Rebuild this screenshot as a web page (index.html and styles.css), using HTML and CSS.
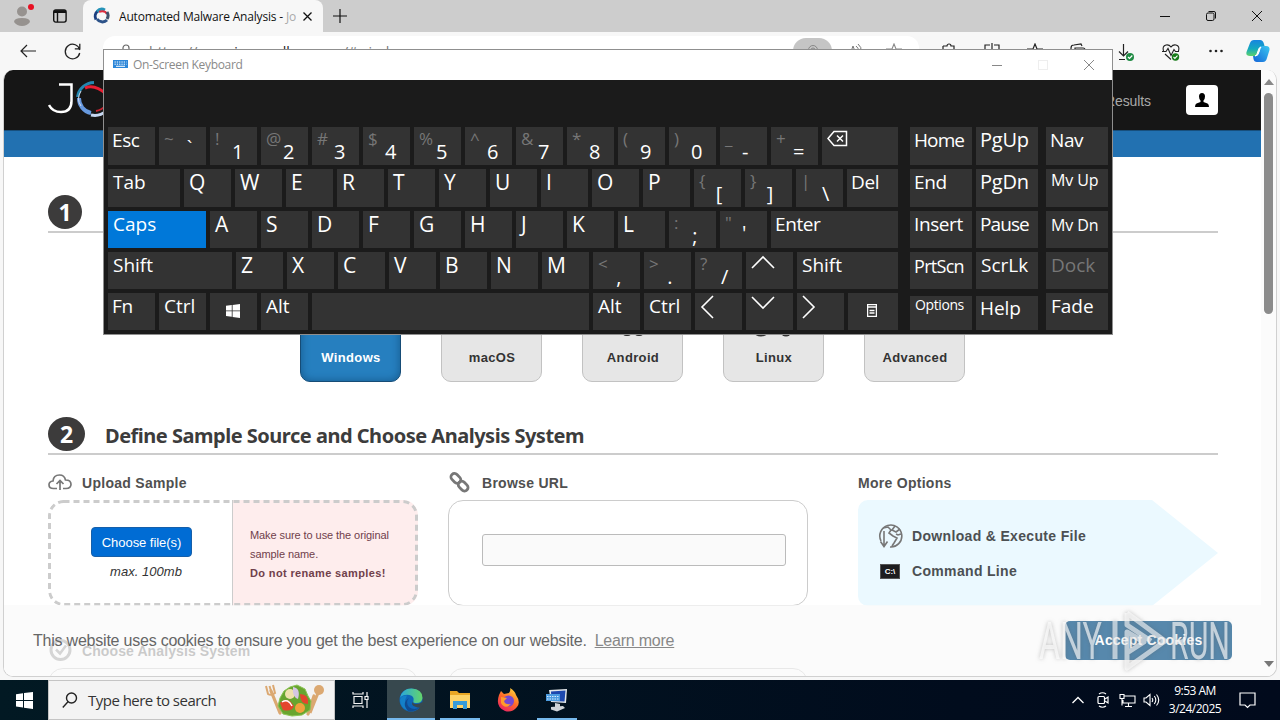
FILE: index.html
```html
<!DOCTYPE html>
<html lang="en">
<head>
<meta charset="utf-8">
<title>Automated Malware Analysis</title>
<link rel="stylesheet" href="styles.css">
</head>
<body>
<div class="screen">
  <header class="tabstrip">
    <div class="tabstrip-left">
      <svg class="profile" width="24" height="28" viewBox="0 0 24 28"><circle cx="10" cy="10.500" r="5" fill="#96928f"/><path d="M2 21q0-4 8-4t8 4q-3 4-8 4t-8-4z" fill="#96928f"/><circle cx="19" cy="6" r="3" fill="#e81123"/></svg>
      <svg class="workspace" width="14" height="14" viewBox="0 0 14 14" fill="none" stroke="#111" stroke-width="1.4"><rect x=".7" y=".9" width="12.4" height="12.2" rx="2"/><path d="M4.5 4v9M1 3.2h12" /><path d="M1 2.3h12" stroke-width="2.4"/></svg>
    </div>
    <div class="tab">
      <svg width="18" height="18" viewBox="0 0 18 18" fill="none" stroke-width="3"><path d="M3 12.500A6.500 6.500 0 0 1 5 4" stroke="#1c3f80"/><path d="M4 4.500A6.600 6.600 0 0 1 12 3" stroke="#2593b8"/><path d="M6 4.800Q12 3 14 7" stroke="#e02c3c" stroke-width="2"/><path d="M14 5A6.500 6.500 0 0 1 14 12" stroke="#40516b"/><path d="M4 12A6.500 6.500 0 0 0 14 13" stroke="#2d5389"/></svg>
      <span class="tab-title">Automated Malware Analysis - <i>Jo</i></span>
      <svg class="tab-close" width="9" height="9" viewBox="0 0 9 9" stroke="#111" stroke-width="1.3"><path d="M.5.5l8 8M8.500.5l-8 8"/></svg>
    </div>
    <svg class="newtab" width="14" height="14" viewBox="0 0 14 14" stroke="#111" stroke-width="1.200"><path d="M7 0v14M0 7h14"/></svg>
    <div class="wincontrols">
      <svg width="10" height="10" viewBox="0 0 10 10" stroke="#111"><path d="M0 5.500h10"/></svg>
      <svg width="10" height="10" viewBox="0 0 10 10" stroke="#111" fill="none"><rect x=".5" y="2" width="7.500" height="7.500" rx="1.500"/><path d="M2.500.5H8Q9.500.5 9.500 2v5.500"/></svg>
      <svg width="10" height="10" viewBox="0 0 10 10" stroke="#111"><path d="M0 0l10 10M10 0L0 10"/></svg>
    </div>
  </header>

  <div class="toolbar">
    <svg class="back" width="16" height="14" viewBox="0 0 16 14" fill="none" stroke="#222" stroke-width="1.200"><path d="M16 7H1M7 1L1 7l6 6"/></svg>
    <svg class="reload" width="17" height="17" viewBox="0 0 17 17" fill="none" stroke="#222" stroke-width="1.300"><path d="M15.700 7A7.300 7.300 0 1 0 15.700 10M15.800.8v5h-5"/></svg>
    <div class="address">
      <svg width="12" height="15" viewBox="0 0 12 15" fill="none" stroke="#666" stroke-width="1.200"><rect x="1" y="5.500" width="10" height="8" rx="1"/><path d="M3 5.500V4a3 3 0 0 1 6 0v1.500"/></svg>
      <span class="url">https://<b>www.joesandbox.com</b>/#windows</span>
      <div class="pill"><svg width="10" height="12" viewBox="0 0 10 12" fill="none" stroke="#888"><circle cx="5" cy="5" r="4.500"/><circle cx="5" cy="5" r="2"/></svg></div>
      <svg class="read" width="14" height="14" viewBox="0 0 14 14" fill="none" stroke="#777"><path d="M1 13L5 2l4 11M8 2q3 2 2 5M10 0q4 3 3 8"/></svg>
      <svg width="16" height="16" viewBox="0 0 16 16" fill="none" stroke="#888" stroke-width="1.100"><path d="M8 1l2 5h6l-5 4 2 6-5-4-5 4 2-6-5-4h6z"/></svg>
    </div>
    <div class="tools">
      <svg width="16" height="16" viewBox="0 0 16 16" fill="none" stroke="#222" stroke-width="1.200"><path d="M2 3h4a2 2 0 0 1 4 0h3v4M2 3v12h12V8"/></svg>
      <svg width="16" height="16" viewBox="0 0 16 16" fill="none" stroke="#222" stroke-width="1.200"><path d="M6 2H1v12h5M10 2h5v12h-5M8 0v16"/></svg>
      <svg width="16" height="16" viewBox="0 0 16 16" fill="none" stroke="#222" stroke-width="1.200"><path d="M8 1l2 5h6l-5 4 2 6-5-4-5 4 2-6-5-4h6z"/></svg>
      <svg width="16" height="16" viewBox="0 0 16 16" fill="none" stroke="#222" stroke-width="1.200"><path d="M1 12V5q0-3 3-3l7-1 1 2M5 5h8q2 0 2 2v7H5z"/></svg>
      <svg width="18" height="18" viewBox="0 0 18 18" fill="none" stroke="#222" stroke-width="1.200"><path d="M6.500 1v12M2 8.500L6.500 13 11 8.500M2 16.500h6"/><circle cx="13" cy="14" r="4" fill="#1f8a43" stroke="none"/><path d="M11 14l1.500 1.500 2.800-3" stroke="#fff"/></svg>
      <svg width="18" height="18" viewBox="0 0 18 18" fill="none" stroke="#222" stroke-width="1.100"><path d="M1.500 8Q0 3 4 2q3-.7 5 2 2-2.700 5-2 4 1 2.500 6M3 11l6 5.500M0 8.500h4l2-3 3 7 3-6 1.500 2H17"/><circle cx="13.500" cy="14" r="3.700" fill="#187c19" stroke="none"/><path d="M11.500 14l1.400 1.400 2.600-2.700" stroke="#fff"/></svg>
      <svg class="dots" width="16" height="16" viewBox="0 0 16 16" fill="#222"><circle cx="2.500" cy="8" r="1.300"/><circle cx="8" cy="8" r="1.300"/><circle cx="13.500" cy="8" r="1.300"/></svg>
      <svg width="24" height="24" viewBox="0 0 24 24"><defs><linearGradient id="ca" x1="0" y1="0" x2="0" y2="1"><stop offset="0" stop-color="#1785e0"/><stop offset=".55" stop-color="#14a9be"/><stop offset="1" stop-color="#5ed26b"/></linearGradient><linearGradient id="cb" x1="1" y1="0" x2="0" y2="1"><stop offset="0" stop-color="#3bc8f0"/><stop offset="1" stop-color="#1464d8"/></linearGradient></defs><path d="M8 1h6q3 0 4 4l.8 3h-4L10 17H4Q-.5 17 .5 13L4 4q1-3 4-3z" fill="url(#ca)"/><path d="M14 7h6q4 0 3.500 4L21 19q-1 4-4 4h-6q-3 0-3.500-3L7 17h3q2 0 3-4z" fill="url(#cb)"/><path d="M15 8q-2 0-3 4-1 5-3 5 3 0 4-4t2-5z" fill="#fff" stroke="#fff"/></svg>
    </div>
  </div>

  <div class="viewport">
    <div class="page">
      <div class="site-header">
        <svg class="logo" width="70" height="40" viewBox="0 0 70 40" fill="none"><path d="M11 4.500h12.500V21q0 11-10.500 11Q4.500 32 1 25" stroke="#fff" stroke-width="2.500"/><path d="M29.500 17A17 17 0 0 1 46 2.500" stroke="#2387b0" stroke-width="3"/><path d="M37 8Q47 4 58 14" stroke="#e61e32" stroke-width="3"/><path d="M31 18A15 15 0 0 0 43 33" stroke="#6799df" stroke-width="4"/><path d="M33 11q-5 8 0 15" stroke="#d7deea" stroke-width="1"/><path d="M43 35A17 17 0 0 0 58 31" stroke="#c6d7f2" stroke-width="3"/><path d="M48 31q6-1 10-6" stroke="#c22431" stroke-width="2"/></svg>
        <span class="results">Results</span>
        <div class="user"><svg width="14" height="15" viewBox="0 0 14 15"><path d="M7 0q3 0 3 3.500Q10 6 8.500 7.500V9l4 1.500Q14 11 14 14H0q0-3 1.500-3.500l4-1.500V7.500Q4 6 4 3.500 4 0 7 0z"/></svg></div>
      </div>
      <div class="site-nav"></div>
      <main class="content">
        <div class="step step-one"><span class="num">1</span></div>
        <div class="platforms">
          <div class="tile active">Windows</div>
          <div class="tile">macOS</div>
          <div class="tile"><svg class="glyph" width="40" height="8" viewBox="0 0 40 8" fill="#333"><rect x="10" y="0" width="8" height="7" rx="3"/><rect x="22" y="0" width="8" height="7" rx="3"/></svg>Android</div>
          <div class="tile"><svg class="glyph" width="40" height="8" viewBox="0 0 40 8" fill="#333"><ellipse cx="7" cy="3" rx="7" ry="4.500"/><ellipse cx="32" cy="3" rx="5" ry="4.500"/></svg>Linux</div>
          <div class="tile">Advanced</div>
        </div>
        <div class="step step-two"><span class="num">2</span><h2>Define Sample Source and Choose Analysis System</h2></div>
        <div class="columns">
          <section>
            <h3><svg width="24" height="17" viewBox="0 0 24 17" fill="none" stroke="#777" stroke-width="1.700"><path d="M9 14.500H5.500Q1 14.500 1 10.700 1 7.500 5 7 5.500 1 11.500 1q5 0 6 5 5.500 0 5.500 4.300 0 4.200-5 4.200h-3M12 16V6.500M8.500 10L12 6.500l3.500 3.500"/></svg>Upload Sample</h3>
            <div class="upload">
              <svg class="dash" width="370" height="106"><rect x="1.500" y="1.500" width="367" height="103" rx="14" fill="none" stroke="#ccc" stroke-width="3" stroke-dasharray="6 4"/></svg>
              <div class="choose"><span class="btn">Choose file(s)</span><em>max. 100mb</em></div>
              <div class="warn"><p>Make sure to use the original</p><p>sample name.</p><p class="strong">Do not rename samples!</p></div>
            </div>
          </section>
          <section>
            <h3><svg width="24" height="22" viewBox="0 0 24 22" fill="none" stroke="#777" stroke-width="2.800"><rect x="-5" y="-3.500" width="11" height="7" rx="3.500" transform="translate(7.500 6) rotate(46)"/><rect x="-6" y="-3.500" width="11" height="7" rx="3.500" transform="translate(15.500 14.500) rotate(46)"/></svg>Browse URL</h3>
            <div class="browse"><div class="field"></div></div>
          </section>
          <section>
            <h3>More Options</h3>
            <div class="options">
              <div class="option"><svg width="25" height="26" viewBox="0 0 25 26" fill="none" stroke="#777" stroke-width="1.600"><path d="M3 18A11 11 0 1 1 12 24M6 8v15M2.500 18.500L6 23.500l3.500-5"/><path d="M5 5l5-1 3 3-2 3 4 3 4 2-3 5-2 3M17 3l-3 4 4 2 4-3M23 11l-3 1-2-1"/></svg>Download &amp; Execute File</div>
              <div class="option"><span class="cmd">C:\</span>Command Line</div>
            </div>
          </section>
        </div>
        <div class="columns below">
          <section>
            <h3><svg width="24" height="24" viewBox="0 0 24 24" fill="none" stroke="#777"><circle cx="12.500" cy="11" r="9.500" stroke-width="3"/><path d="M8 10.500l4 4 6-8" stroke-width="2.500"/></svg>Choose Analysis System</h3>
            <div class="stub"></div>
          </section>
          <section><h3></h3><div class="stub"></div></section>
        </div>
      </main>
      <div class="cookies"><p>This website uses cookies to ensure you get the best experience on our website.</p><a>Learn more</a><span class="accept">Accept Cookies</span></div>
    </div>
    <div class="scrollbar"><i class="up"></i><div class="thumb"></div><i class="down"></i></div>
  </div>

  <footer class="taskbar">
    <div class="start"><svg width="17" height="17" viewBox="0 0 17 17" fill="#fff"><path d="M0 2.200L7 1.300v6.600H0zM8 1.100L17 0v7.900H8zM0 8.900h7v6.700l-7-1zM8 8.900h9V17l-9-1.200z"/></svg></div>
    <div class="search">
      <svg width="16" height="17" viewBox="0 0 16 17" fill="none" stroke="#222" stroke-width="1.400"><circle cx="9.500" cy="6" r="5"/><path d="M6 9.800L.8 15.500"/></svg>
      <span>Type here to search</span>
      <svg class="salad" width="64" height="34" viewBox="0 0 64 34"><path d="M7 8l9 22M50 13l-6 18" stroke="#dba871" stroke-width="3.200" stroke-linecap="round"/><path d="M2 3l2 8q3 2 7-1L9 2M5.500 3l1.500 5" stroke="#dba871" stroke-width="2" fill="none"/><circle cx="55" cy="7" r="5" fill="#dba871"/><path d="M54 10l-8 20" stroke="#dba871" stroke-width="3"/><path d="M14 23l2-8 4-7 6-4 7-2 8 4 3 7 3 5-1 9-8 5-10 1-9-2z" fill="#68a52f" stroke="#8cc455"/><path d="M16 20q7-8 14 3-2 6-11 4z" fill="#e4452d"/><path d="M18 19q6-4 10 4" fill="none" stroke="#fff" stroke-width="1.500"/><path d="M36 11q9 0 8 10-8 0-8-10z" fill="#e4452d"/><circle cx="26" cy="11" r="5" fill="#f0e1ac"/><path d="M29 4q8 1 5 12-6-2-5-12z" fill="#d5c6e4"/><circle cx="36" cy="25" r="5" fill="#f0a23c"/></svg>
    </div>
    <div class="app"><svg width="18" height="18" viewBox="0 0 18 18" fill="none" stroke="#f4f4f4" stroke-width="1.200"><path d="M1 1v2h10V1M1 17v-2h10v2M2 5.500h8v7H2zM15 1v4M15 9v8M13 5.500h3v3h-3z"/></svg></div>
    <div class="app edge"><svg width="24" height="24" viewBox="0 0 24 24"><defs><linearGradient id="eg"><stop offset="0" stop-color="#2aa7dc"/><stop offset="1" stop-color="#63d56b"/></linearGradient></defs><circle cx="12" cy="12" r="11.500" fill="#0e66b8"/><path d="M1 10Q3 .5 12.500.5 23.500 1 23.500 10q-.5 5-6 5-4 0-3-2 1-5-4-6Q4 6 1 10z" fill="url(#eg)"/><path d="M14 13q-1 3 4 3 3 0 5-2l2 2-3 4q-8-1-9-4z" fill="#39484e"/><path d="M1 12q1-5 7-4.500Q3 16 10 23 1 20 1 12z" fill="#1480c8"/><path d="M10 10q-4 4 0 9 5 4 11 0l-2 2q-5 3-10 2-7-8 1-13z" fill="#104b91"/></svg></div>
    <div class="app run"><svg width="22" height="20" viewBox="0 0 22 20"><path d="M1 1h7l2 2h11v15H1z" fill="#e9a724"/><path d="M1 5h20v13H1z" fill="#fdd367"/><path d="M4 19v-8h14v8h-4v-4H8v4z" fill="#359bd9"/></svg></div>
    <div class="app"><svg width="23" height="24" viewBox="0 0 23 24"><defs><linearGradient id="fg" x1=".8" y1="0" x2=".2" y2="1"><stop offset="0" stop-color="#ffd83b"/><stop offset=".5" stop-color="#ff6a28"/><stop offset="1" stop-color="#e81e68"/></linearGradient></defs><path d="M2 7l2-4 3 3 5-1q2-3 1-5 5 3 6 7 5 7 1 12-5 6-12 4Q-2 19 2 7z" fill="url(#fg)"/><circle cx="11.500" cy="13" r="5.500" fill="#7448d2"/><path d="M4 9l6 1-3 3q1 4 7 3-6 6-10-1z" fill="#ff9b2a"/></svg></div>
    <div class="app run"><svg width="24" height="24" viewBox="0 0 24 24"><path d="M4 2l18-1-1 14-15-1z" fill="#e3e7ea"/><path d="M6 3.500l14.500-1-1 11-13-.5z" fill="#1d48ae"/><path d="M1 6h14v7H1z" fill="#4c9ce0"/><path d="M2 8.500h12M2 11h12" stroke="#d7ebff" stroke-dasharray="1.500 1"/><path d="M10 15l5 1v4h-5zM6 19l12-1 2 2-8 3.500-6-2z" fill="#cfd3d8"/></svg></div>
    <div class="tray">
      <svg width="12" height="8" viewBox="0 0 12 8" fill="none" stroke="#fff" stroke-width="1.300"><path d="M.5 7L6 1.500 11.500 7"/></svg>
      <svg width="12" height="16" viewBox="0 0 12 16" fill="none" stroke="#fff" stroke-width="1.200"><rect x="1" y="4.500" width="6.500" height="7" rx="1"/><path d="M8 7l3-2v6L8 9M2 2q3.500-2.500 7 0M2 14q3.500 2.500 7 0"/></svg>
      <svg width="17" height="15" viewBox="0 0 17 15" fill="none" stroke="#fff" stroke-width="1.100"><path d="M5 3h11v7H4V7M9.500 10v3M6 13.500h7M1 1.500h4v4H1zM3 5.500v7"/></svg>
      <svg width="17" height="14" viewBox="0 0 17 14" fill="none" stroke="#fff" stroke-width="1.100"><path d="M1 5v4h2l4 3.500v-11L3 5zM9 5q1.500 2 0 4M11.300 3q3 4 0 8M13.500 1.500q4.500 5.500 0 11"/></svg>
      <div class="clock"><span>9:53 AM</span><span>3/24/2025</span></div>
      <svg width="17" height="17" viewBox="0 0 17 17" fill="none" stroke="#fff" stroke-width="1.200"><path d="M1 1h15v12h-5l-2.500 2.500L6 13H1z"/></svg>
    </div>
  </footer>

  <div class="osk">
    <div class="osk-title">
      <svg width="15" height="9" viewBox="0 0 15 9"><rect width="15" height="8" fill="#2b86d9"/><path d="M1.500 2h12M1.500 4.200h12" stroke="#fff" stroke-dasharray="1.300 1"/><path d="M3 6.300h9" stroke="#fff"/></svg>
      <span>On-Screen Keyboard</span>
      <div class="osk-controls">
        <svg width="10" height="10" viewBox="0 0 10 10" stroke="#888"><path d="M0 5.500h10"/></svg>
        <svg width="10" height="10" viewBox="0 0 10 10" stroke="#eee" fill="none"><rect x=".5" y=".5" width="9" height="9"/></svg>
        <svg width="10" height="10" viewBox="0 0 10 10" stroke="#888"><path d="M0 0l10 10M10 0L0 10"/></svg>
      </div>
    </div>
    <div class="osk-body">
      <div class="keys">
        <div class="row tall">
          <div class="key">Esc</div><div class="key dual mid"><s>~</s><b>`</b></div><div class="key dual"><s>!</s><b>1</b></div><div class="key dual"><s>@</s><b>2</b></div><div class="key dual"><s>#</s><b>3</b></div><div class="key dual"><s>$</s><b>4</b></div><div class="key dual"><s>%</s><b>5</b></div><div class="key dual"><s>^</s><b>6</b></div><div class="key dual"><s>&amp;</s><b>7</b></div><div class="key dual"><s>*</s><b>8</b></div><div class="key dual"><s>(</s><b>9</b></div><div class="key dual"><s>)</s><b>0</b></div><div class="key dual punct"><s>_</s><b>-</b></div><div class="key dual"><s>+</s><b>=</b></div>
          <div class="key grow"><svg class="bksp" width="21" height="17" viewBox="0 0 21 17" fill="none" stroke="#fff" stroke-width="1.500"><path d="M1 8.500L7 1.500h12.500v14H7zM10 5.500l6 6M16 5.500l-6 6"/></svg></div>
        </div>
        <div class="row tall">
          <div class="key w72 wide">Tab</div><div class="key lt">Q</div><div class="key lt">W</div><div class="key lt">E</div><div class="key lt">R</div><div class="key lt">T</div><div class="key lt">Y</div><div class="key lt">U</div><div class="key lt">I</div><div class="key lt">O</div><div class="key lt">P</div><div class="key dual punct"><s>{</s><b>[</b></div><div class="key dual punct"><s>}</s><b>]</b></div><div class="key dual"><s>|</s><b>\</b></div><div class="key grow">Del</div>
        </div>
        <div class="row">
          <div class="key w98 on wide">Caps</div><div class="key lt">A</div><div class="key lt">S</div><div class="key lt">D</div><div class="key lt">F</div><div class="key lt">G</div><div class="key lt">H</div><div class="key lt">J</div><div class="key lt">K</div><div class="key lt">L</div><div class="key dual punct"><s>:</s><b>;</b></div><div class="key dual quote"><s>"</s><b>'</b></div><div class="key grow">Enter</div>
        </div>
        <div class="row">
          <div class="key w124 wide">Shift</div><div class="key lt">Z</div><div class="key lt">X</div><div class="key lt">C</div><div class="key lt">V</div><div class="key lt">B</div><div class="key lt">N</div><div class="key lt">M</div><div class="key dual punct"><s>&lt;</s><b>,</b></div><div class="key dual punct"><s>&gt;</s><b>.</b></div><div class="key dual"><s>?</s><b>/</b></div>
          <div class="key"><svg class="arrow" width="24" height="14" viewBox="0 0 24 14"><path d="M1 13L12 2l11 11"/></svg></div><div class="key grow wide">Shift</div>
        </div>
        <div class="row">
          <div class="key">Fn</div><div class="key wide">Ctrl</div>
          <div class="key center"><svg width="14" height="14" viewBox="0 0 17 17" fill="#fff"><path d="M0 2.200L7 1.300v6.600H0zM8 1.100L17 0v7.900H8zM0 8.900h7v6.700l-7-1zM8 8.900h9V17l-9-1.200z"/></svg></div>
          <div class="key wide">Alt</div><div class="key w277"></div><div class="key wide">Alt</div><div class="key wide">Ctrl</div>
          <div class="key"><svg class="arrow side" width="14" height="24" viewBox="0 0 14 24"><path d="M13 1L2 12l11 11"/></svg></div>
          <div class="key"><svg class="arrow" width="24" height="14" viewBox="0 0 24 14"><path d="M1 1l11 11L23 1"/></svg></div>
          <div class="key"><svg class="arrow side" width="14" height="24" viewBox="0 0 14 24"><path d="M1 1l11 11L1 23"/></svg></div>
          <div class="key grow center"><svg width="10" height="13" viewBox="0 0 10 13" fill="none" stroke="#fff" stroke-width="1.300"><path d="M.6.600h8.800v11.800H.6zM0 3h10M2.500 6.500h5M2.500 9h5" /></svg></div>
        </div>
      </div>
      <div class="side-keys">
        <div class="key tight">Home</div><div class="key big">PgUp</div><div class="key">Nav</div>
        <div class="key">End</div><div class="key big">PgDn</div><div class="key small">Mv Up</div>
        <div class="key">Insert</div><div class="key tight">Pause</div><div class="key small low">Mv Dn</div>
        <div class="key prt">PrtScn</div><div class="key wide">ScrLk</div><div class="key off wide">Dock</div>
        <div class="key opt">Options</div><div class="key drop">Help</div><div class="key wide">Fade</div>
      </div>
    </div>
  </div>

  <svg class="watermark" width="210" height="66" viewBox="0 0 210 66">
    <text x="7" y="50" textLength="63" lengthAdjust="spacingAndGlyphs">ANY</text>
    <path d="M83 12v38M95 4l38 28-38 27v-36l17 10-17 11M95 4v12l24 16"/>
    <text x="138" y="50" textLength="60" lengthAdjust="spacingAndGlyphs">RUN</text>
  </svg>
</div>
</body>
</html>
```
FILE: styles.css
```css
* { box-sizing: border-box; }
body { margin: 0; font-family: "Liberation Sans", Arial, sans-serif; }
h2, h3, p { margin: 0; }
svg { display: block; flex: none; }
.screen { position: relative; width: 1280px; height: 720px; overflow: hidden; display: flex; flex-direction: column; background: #f7f7f7; }

.tabstrip { height: 32px; display: flex; background: #cdcdcd; flex: none; }
.tabstrip-left { width: 83px; display: flex; }
.profile { margin: 1px 0 0 12px; }
.workspace { margin: 9px 0 0 17px; }
.tab { width: 240px; padding: 0 11px 0 10px; display: flex; align-items: center; background: #f7f7f7; border-radius: 8px 8px 0 0; }
.tab-title { margin-left: 8px; width: 177px; font: 12px "Open Sans", sans-serif; letter-spacing: -.18px; color: #111; white-space: nowrap; overflow: hidden; }
.tab-title i { font-style: normal; color: #aaa; }
.tab-close { margin-left: 7px; }
.newtab { margin: 9px 0 0 10px; }
.wincontrols { margin-left: auto; padding: 11px 18px 0 0; display: flex; gap: 36px; }

.toolbar { height: 38px; flex: none; display: flex; align-items: center; background: #f7f7f7; }
.back { margin-left: 20px; }
.reload { margin-left: 28px; }
.address { width: 816px; height: 30px; margin-left: 22px; padding: 0 17px; display: flex; align-items: center; background: #fff; border-radius: 12px; }
.url { margin-left: 17px; font: 14px "Open Sans", sans-serif; letter-spacing: .1px; color: #777; }
.url b { color: #222; font-weight: 400; }
.pill { width: 39px; height: 26px; margin-left: auto; border-radius: 13px; background: #c5c5c5; display: flex; align-items: center; justify-content: center; }
.read { margin: 0 24px 0 16px; }
.tools { flex: 1; padding: 0 10px 0 22px; display: flex; justify-content: space-between; align-items: center; }
.tools svg:nth-child(5), .tools svg:nth-child(6) { margin: 1px -4px 0 4px; }
.dots { margin: 0 -5px 0 5px; }

.viewport { height: 607px; margin: 0 3px 3px; flex: none; display: flex; background: #fff; border: 1px solid #d0d0d0; border-top: 0; border-radius: 10px; overflow: hidden; }
.page { position: relative; width: 1257px; height: 606px; overflow: hidden; background: #fff; }
.site-header { height: 60px; display: flex; align-items: center; background: #161616; }
.logo { margin-left: 44px; }
.results { margin: 2px 0 0 987px; font-size: 14px; letter-spacing: -.1px; color: #a9a9a9; }
.user { width: 32px; height: 30px; margin-left: auto; margin-right: 43px; border-radius: 4px; background: #fff; display: flex; align-items: center; justify-content: center; }
.site-nav { height: 27px; background: #2271b1; border-top: 1px solid #174f7d; }
.content { padding: 0 43px 0 44px; }
.step { display: flex; height: 38px; border-bottom: 2px solid #ccc; color: #3c3c3c; }
.step-one { margin-top: 38px; }
.step-two { margin-top: 35px; }
.num { width: 34px; height: 34px; flex: none; border-radius: 50%; background: #3c3b3b; color: #fff; font: bold 23px/34px "Noto Sans", sans-serif; text-align: center; }
.step-two .num { width: 37px; }
h2 { margin-left: 20px; font: bold 20px/38px "Noto Sans", sans-serif; letter-spacing: -.49px; white-space: nowrap; }
.platforms { margin: 48px 0 0 252px; display: flex; gap: 40px; }
.tile { position: relative; width: 101px; height: 101px; padding: 68px 0 0 1px; border: 1px solid #c2c2c2; border-radius: 10px; background: #e6e6e6; color: #333; font-weight: bold; font-size: 13px; line-height: 16px; letter-spacing: .35px; text-align: center; }
.tile.active { background: #267fbf; border-color: #164c76; color: #fff; box-shadow: inset 0 0 8px #15598c; }
.glyph { position: absolute; top: 47px; left: 30px; }

.columns { display: flex; }
.columns section { width: 370px; }
.columns section + section { width: 360px; margin-left: 30px; }
.columns section + section + section { margin-left: 50px; }
h3 { height: 45px; padding-top: 10px; display: flex; align-items: center; gap: 10px; color: #505050; font-size: 14px; letter-spacing: .28px; }
.upload { position: relative; height: 106px; display: flex; border-radius: 15px; overflow: hidden; }
.dash { position: absolute; left: 0; top: 0; }
.choose { width: 184px; padding: 27px 0 0 43px; }
.btn { display: block; width: 101px; height: 30px; border: 1px solid #155faa; border-radius: 4px; background: #006cd4; color: #fff; font-size: 13px; line-height: 29px; letter-spacing: -.05px; text-align: center; }
em { display: block; margin: 6px 0 0 19px; font-size: 13px; line-height: 18px; letter-spacing: .05px; color: #333; }
.warn { flex: 1; padding: 26px 0 0 17px; border-left: 1px solid #ccc; background: #feeded; color: #70404b; font-size: 11px; line-height: 19px; letter-spacing: -.08px; white-space: nowrap; }
.strong { font-weight: bold; letter-spacing: .36px; }
.browse { height: 106px; padding: 33px 21px 0 33px; border: 1px solid #ccc; border-radius: 15px; }
.field { height: 32px; border: 1px solid #bbb; border-radius: 3px; background: #fafafa; }
.options { height: 106px; padding: 23px 0 0 20px; display: flex; flex-direction: column; gap: 9px; background: #ebf9ff; border-radius: 10px 0 0 10px; clip-path: polygon(0 0, 294px 0, 360px 53px, 294px 106px, 0 106px); }
.option { height: 26px; display: flex; align-items: center; gap: 10px; color: #4c5053; font-size: 14px; font-weight: bold; letter-spacing: .33px; }
.option svg { margin-right: -1px; }
.cmd { width: 20px; height: 15px; margin: 0 2px; border: 1px solid #555; background: #1d1d1f; color: #fff; font-size: 8px; line-height: 13px; letter-spacing: 0; text-align: center; }
.below { margin-top: 16px; }
.below h3 { height: 46px; padding-top: 11px; }
.below .stub { border-color: #bbb; }
.stub { height: 30px; border: 1px solid #999; border-radius: 15px; }
.below section:first-child h3 { letter-spacing: .1px; }
.cookies { position: absolute; left: 0; right: 0; bottom: 0; height: 71px; padding: 0 29px; display: flex; align-items: center; background: rgba(250, 250, 250, .72); color: #666; font-size: 16px; letter-spacing: -.22px; }
.cookies a { margin-left: 8px; color: #888; text-decoration: underline; }
.accept { width: 167px; height: 39px; margin-left: auto; border-radius: 5px; background: #5788ac; color: #fff; font-size: 14px; font-weight: bold; line-height: 39px; letter-spacing: .2px; text-align: center; }
.scrollbar { flex: 1; display: flex; flex-direction: column; align-items: center; padding: 9px 0 9px; background: #fbfbfb; }
.up { border: 5px solid transparent; border-top: 0; border-bottom: 6px solid #888; }
.thumb { width: 9px; height: 221px; margin-top: 8px; border-radius: 5px; background: #8b8b8b; }
.down { margin-top: auto; border: 5px solid transparent; border-bottom: 0; border-top: 6px solid #777; }

.taskbar { height: 40px; flex: none; display: flex; background: linear-gradient(90deg, #021923, #010c1d 75%, #010a1c); }
.start { width: 48px; display: flex; align-items: center; justify-content: center; }
.search { width: 287px; padding-left: 13px; display: flex; align-items: center; background: #f3f3f3; border: 1px solid #c4c4c4; color: #333; font: 15px "Open Sans", sans-serif; }
.search span { margin-left: 10px; letter-spacing: -.52px; white-space: nowrap; }
.salad { margin: 0 6px 0 auto; }
.app { width: 49px; display: flex; align-items: center; justify-content: center; }
.app:nth-child(3) { width: 52px; }
.app.edge { width: 48px; background: #37484e; box-shadow: inset 0 -2px #76b9ed; }
.app.run { width: 40px; margin: 0 5px 0 5px; box-shadow: inset 0 -2px #76b9ed; }
.app + .app:nth-child(6) { width: 47px; }
.tray { margin-left: auto; padding-right: 24px; display: flex; align-items: center; }
.tray > svg + svg { margin-left: 13px; }
.tray > svg:nth-child(3) { margin-left: 10px; }
.tray > svg:nth-child(4) { margin-left: 7px; }
.clock { width: 62px; margin: 0 13px 0 4px; display: flex; flex-direction: column; align-items: center; color: #fff; font: 12px/18px "Open Sans", sans-serif; letter-spacing: -.5px; white-space: nowrap; }

.osk { position: absolute; left: 104px; top: 50px; width: 1008px; height: 284px; background: #1b1b1b; outline: 1px solid #8f8f8f; }
.osk-title { height: 30px; padding: 0 18px 1px 9px; display: flex; align-items: center; background: #fff; color: #8a8a8a; font: 12px "Open Sans", sans-serif; letter-spacing: -.32px; }
.osk-title span { margin-left: 5px; }
.osk-controls { margin-left: auto; display: flex; gap: 36px; }
.osk-body { padding: 47px 4px 0; display: flex; justify-content: space-between; }
.keys { width: 790px; display: flex; flex-direction: column; gap: 4px; }
.row { display: flex; gap: 4px; height: 37px; }
.row.tall { height: 38px; }
.key { width: 47px; padding: 0 0 0 4px; flex: none; background: #333; color: #fff; font: 19px/27px "Open Sans", sans-serif; letter-spacing: -.4px; white-space: nowrap; }
.key.wide { padding-left: 5px; letter-spacing: 0; }
.key.tight { letter-spacing: -.9px; }
.key.big { font-size: 20px; line-height: 25px; letter-spacing: -.2px; }
.key.lt { padding-left: 5px; font-size: 21px; line-height: 27px; }
.key.w72 { width: 72px; }
.key.w98 { width: 98px; line-height: 26px; }
.key.w124 { width: 124px; }
.key.w277 { width: 277px; }
.key.grow { flex: 1; width: auto; }
.key.on { background: #0078d9; }
.key.center { display: flex; align-items: center; justify-content: center; padding: 0 2px 3px 0; }
.row .key.center { padding: 0 2px 2px 0; }
.key.dual { display: flex; padding: 0 14px 0 5px; justify-content: space-between; }
.key.dual.punct { padding-right: 19px; }
.key.dual.quote { padding-right: 21px; }
.dual s { text-decoration: none; color: #777; font-size: 17px; line-height: 24px; }
.dual b { font-weight: 400; font-size: 20px; line-height: 50px; }
.mid b { line-height: 41px; }
.quote b { line-height: 44px; }
.bksp { margin: 3px 0 0 1px; }
.arrow { margin: 3px 0 0 1px; fill: none; stroke: #fff; stroke-width: 1.6; }
.arrow.side { margin: 2px 0 0 1px; }
.side-keys { display: grid; grid-template-columns: 62px 62px 62px; grid-template-rows: 38px 38px 37px 37px 37px; gap: 4px; width: 198px; }
.side-keys .key { width: 62px; }
.side-keys .key:nth-child(3n) { margin: 0 0 0 4px; }
.key.small { font-size: 16px; line-height: 23px; letter-spacing: -.1px; padding-left: 5px; }
.key.low { line-height: 28px; }
.key.prt { font-size: 18px; line-height: 28px; letter-spacing: -.7px; }
.key.opt { margin-top: 3px; padding-left: 5px; font-size: 14px; line-height: 18px; }
.key.drop { margin-top: 3px; line-height: 25px; letter-spacing: -.1px; }
.key.off { color: #777; }

.watermark { position: absolute; left: 1032px; top: 609px; fill: rgba(255, 255, 255, .65); filter: drop-shadow(0 0 2px rgba(90, 90, 90, .55)); }
.watermark text { font: 400 52px Roboto, sans-serif; }
.watermark path { fill: none; stroke: rgba(255, 255, 255, .6); stroke-width: 5; stroke-linejoin: round; }
```
